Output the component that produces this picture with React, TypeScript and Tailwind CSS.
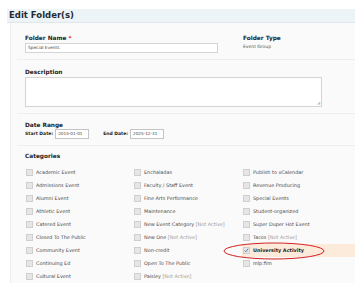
const col1 = [
  'Academic Event',
  'Admissions Event',
  'Alumni Event',
  'Athletic Event',
  'Catered Event',
  'Closed To The Public',
  'Community Event',
  'Continuing Ed',
  'Cultural Event',
]

const col2: [string, boolean][] = [
  ['Enchaladas', false],
  ['Faculty / Staff Event', false],
  ['Fine Arts Performance', false],
  ['Maintenance', false],
  ['New Event Category', true],
  ['New One', true],
  ['Non-credit', false],
  ['Open To The Public', false],
  ['Paisley', true],
]

const col3: [string, boolean][] = [
  ['Publish to vCalendar', false],
  ['Revenue Producing', false],
  ['Special Events', false],
  ['Student-organized', false],
  ['Super Duper Hot Event', false],
  ['Tacos', true],
  ['University Activity', false],
  ['mlp:fim', false],
]

const Box = ({ checked = false }: { checked?: boolean }) => (
  <span className="relative inline-block w-[7px] h-[7px] shrink-0 border border-[#cfcfcf] bg-[#e6e6e6]">
    {checked && (
      <svg viewBox="0 0 7 7" className="absolute left-0 top-0 w-[5px] h-[5px]">
        <path d="M1 3.5 L2.6 5.2 L5.8 1" stroke="#3a5fb0" strokeWidth="1.1" fill="none" />
      </svg>
    )}
  </span>
)

const Row = ({ label, inactive = false, checked = false, hl = false }: { label: string; inactive?: boolean; checked?: boolean; hl?: boolean }) => (
  <div className={`flex items-center h-[13px] pl-[1px] ${hl ? 'bg-[#fcebdb]' : ''}`}>
    <Box checked={checked} />
    <span className={`ml-[3px] whitespace-nowrap ${hl ? 'font-bold text-[#222]' : 'text-[#4a4a4a]'}`}>
      {label}
      {inactive && <span className="text-[#9a9a9a]"> [Not Active]</span>}
    </span>
  </div>
)

export default function App() {
  return (
    <div className="w-[355px] h-[287px] bg-white pt-[9px] pl-[7px] overflow-hidden text-[4.9px] text-[#333]" style={{ fontFamily: '"DejaVu Sans", Verdana, sans-serif' }}>
      <div className="h-[14px] bg-[#edf4f8] border-b border-[#dfe7ec] flex items-center pl-[2px]">
        <span className="font-bold text-[8.5px] text-[#1e2a33]">Edit Folder(s)</span>
      </div>
      <div className="ml-[3px] bg-[#fafafa] border-l border-[#ececec] h-[260px] pl-[6px] relative">
        <div className="border-b border-[#eeeeee] pl-[8px] pt-[11px] pb-[6px] flex">
          <div className="w-[218px]">
            <div className="font-bold text-[5.8px] text-[#222] leading-[8px]">
              Folder Name <span className="text-[#e02020]">*</span>
            </div>
            <div className="mt-[1px] w-[193px] h-[10px] bg-white border border-[#d4d4d4] text-[4.3px] leading-[8px] pl-[2px] text-[#444]">Special Events</div>
          </div>
          <div>
            <div className="font-bold text-[5.8px] text-[#222] leading-[8px]">Folder Type</div>
            <div className="text-[4.5px] leading-[10px] text-[#555]">Event Group</div>
          </div>
        </div>
        <div className="border-b border-[#eeeeee] pl-[8px] pt-[8px] pb-[6px]">
          <div className="font-bold text-[5.8px] text-[#222] leading-[8px]">Description</div>
          <div className="mt-[1px] w-[297px] h-[30px] bg-white border border-[#d4d4d4] relative">
            <span className="absolute right-[1px] bottom-[1px] text-[4px] leading-[4px] text-[#bbb]">◢</span>
          </div>
        </div>
        <div className="border-b border-[#eeeeee] pl-[8px] pt-[7px] pb-[6px]">
          <div className="font-bold text-[5.8px] text-[#222] leading-[8px]">Date Range</div>
          <div className="flex items-center">
            <span className="font-bold text-[4.5px] text-[#222]">Start Date:</span>
            <div className="ml-[2px] w-[34px] h-[10px] bg-white border border-[#c4c4c4] text-[4.2px] leading-[8px] pl-[2px] text-[#444]">2015-01-01</div>
            <span className="ml-[14px] font-bold text-[4.5px] text-[#222]">End Date:</span>
            <div className="ml-[2px] w-[34px] h-[10px] bg-white border border-[#c4c4c4] text-[4.2px] leading-[8px] pl-[2px] text-[#444]">2025-12-31</div>
          </div>
        </div>
        <div className="pl-[8px] pt-[6px]">
          <div className="font-bold text-[5.8px] text-[#222] leading-[8px]">Categories</div>
          <div className="flex mt-[6px]">
            <div className="w-[108px]">
              {col1.map((c) => (
                <Row key={c} label={c} />
              ))}
            </div>
            <div className="w-[109px]">
              {col2.map(([c, n]) => (
                <Row key={c} label={c} inactive={n} />
              ))}
            </div>
            <div className="flex-1">
              {col3.map(([c, n]) => (
                <Row key={c} label={c} inactive={n} hl={c === 'University Activity'} checked={c === 'University Activity'} />
              ))}
            </div>
          </div>
        </div>
        <svg className="absolute left-[212px] top-[218px] w-[102px] h-[20px] pointer-events-none" viewBox="0 0 102 20">
          <ellipse cx="51" cy="10" rx="50" ry="8" stroke="#d42020" strokeWidth="1" fill="none" />
        </svg>
      </div>
    </div>
  )
}
